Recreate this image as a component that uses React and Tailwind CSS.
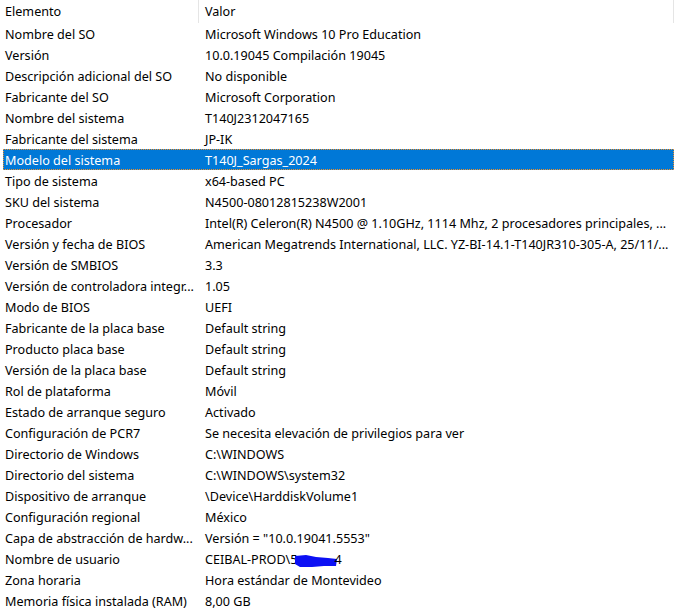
const rows = [
  ["Nombre del SO", "Microsoft Windows 10 Pro Education"],
  ["Versión", "10.0.19045 Compilación 19045"],
  ["Descripción adicional del SO", "No disponible"],
  ["Fabricante del SO", "Microsoft Corporation"],
  ["Nombre del sistema", "T140J2312047165"],
  ["Fabricante del sistema", "JP-IK"],
  ["Modelo del sistema", "T140J_Sargas_2024"],
  ["Tipo de sistema", "x64-based PC"],
  ["SKU del sistema", "N4500-08012815238W2001"],
  ["Procesador", "Intel(R) Celeron(R) N4500 @ 1.10GHz, 1114 Mhz, 2 procesadores principales, ..."],
  ["Versión y fecha de BIOS", "American Megatrends International, LLC. YZ-BI-14.1-T140JR310-305-A, 25/11/..."],
  ["Versión de SMBIOS", "3.3"],
  ["Versión de controladora integr...", "1.05"],
  ["Modo de BIOS", "UEFI"],
  ["Fabricante de la placa base", "Default string"],
  ["Producto placa base", "Default string"],
  ["Versión de la placa base", "Default string"],
  ["Rol de plataforma", "Móvil"],
  ["Estado de arranque seguro", "Activado"],
  ["Configuración de PCR7", "Se necesita elevación de privilegios para ver"],
  ["Directorio de Windows", "C:\\WINDOWS"],
  ["Directorio del sistema", "C:\\WINDOWS\\system32"],
  ["Dispositivo de arranque", "\\Device\\HarddiskVolume1"],
  ["Configuración regional", "México"],
  ["Capa de abstracción de hardw...", "Versión = \"10.0.19041.5553\""],
  ["Nombre de usuario", "user"],
  ["Zona horaria", "Hora estándar de Montevideo"],
  ["Memoria física instalada (RAM)", "8,00 GB"],
];

function UserName() {
  return (
    <span className="inline-flex items-center">
      CEIBAL-PROD\5
      <svg width="44" height="14" viewBox="0 0 44 14" className="-ml-[4px] -mr-[3px]">
        <path d="M1 2 L12 1 L22 3 L34 4 L43 5 L42 12 L30 12 L18 13 L6 13 L1 10 Z" fill="#0c10f4" />
      </svg>
      4
    </span>
  );
}

export default function App() {
  return (
    <div className="w-[682px] h-[613px] bg-white overflow-hidden text-[12.6px] text-black" style={{ fontFamily: '"Noto Sans", sans-serif' }}>
      <div className="flex h-[23px] px-[3px]">
        <div className="w-[196px] pl-[2px] h-[23px] flex items-center border-r border-[#e5e5e5] pt-[1px]">Elemento</div>
        <div className="w-[475px] pl-[6px] h-[23px] flex items-center border-r border-[#e5e5e5] pt-[1px]">Valor</div>
      </div>
      <div className="flex flex-col px-[3px]">
        {rows.map(([k, v], i) => {
          const sel = i === 6;
          return (
            <div
              key={k}
              className={
                sel
                  ? "flex h-[21px] w-[671px] items-center pt-[4px] bg-[#0078d7] text-white outline-1 outline-dotted outline-[#f0902a] -outline-offset-1"
                  : "flex h-[21px] w-[671px] items-center pt-[4px]"
              }
            >
              <div className="w-[196px] pl-[2px] whitespace-nowrap overflow-hidden">{k}</div>
              <div className="flex-1 pl-[6px] whitespace-nowrap overflow-hidden">
                {v === "user" ? <UserName /> : v}
              </div>
            </div>
          );
        })}
      </div>
    </div>
  );
}
